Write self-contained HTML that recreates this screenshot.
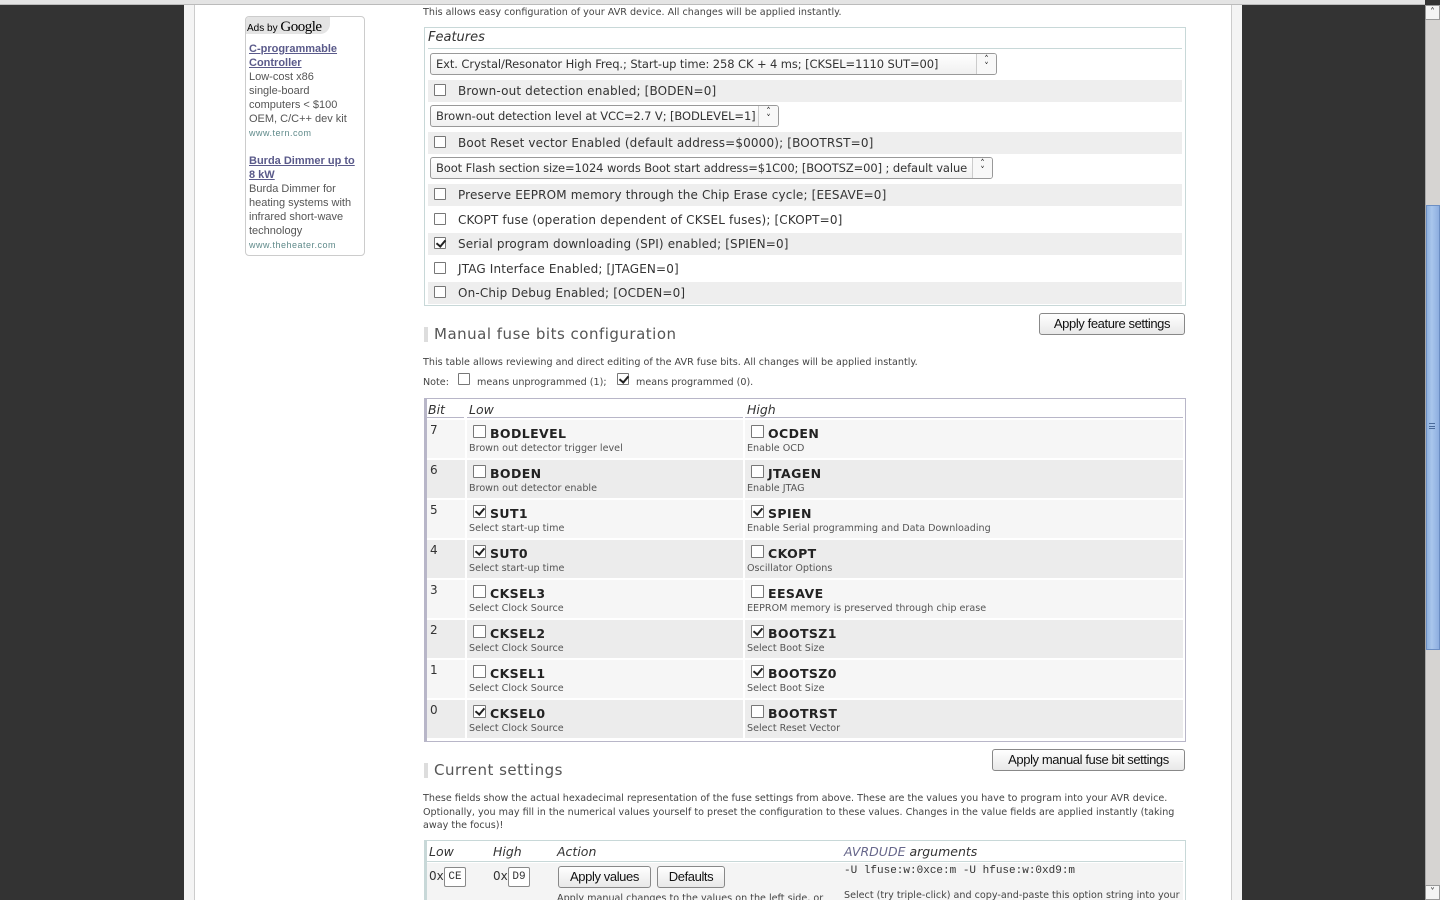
<!DOCTYPE html>
<html><head><meta charset="utf-8"><style>
*{margin:0;padding:0;box-sizing:border-box}
html,body{width:1440px;height:900px;overflow:hidden}
body{background:#333;font-family:"DejaVu Sans",sans-serif;color:#333;position:relative}
.a{position:absolute;white-space:nowrap}
.cb{position:absolute;width:12px;height:12px;border:1px solid #777;background:#fff;border-radius:1px}
.cb.c::after{content:"";position:absolute;left:3px;top:0px;width:4px;height:7px;border:solid #222;border-width:0 2px 2px 0;transform:rotate(40deg)}
.row{position:absolute;left:428px;width:754px;height:22px;font-size:12px;letter-spacing:.15px}
.row.g{background:#eeeeee}
.row .cb{left:6px;top:4px}
.row span{position:absolute;left:30px;top:4px}
.sel{position:absolute;left:430px;height:22px;border:1px solid #999;border-radius:3px;background:linear-gradient(#fff,#f0f0f0);font-size:11.5px;padding:3px 0 0 5px;white-space:nowrap;overflow:hidden;letter-spacing:-.1px}
.sel i{position:absolute;right:0;top:0;width:20px;height:20px;border-left:1px solid #ccc;font-style:normal;font-size:9px;text-align:center;line-height:7px;padding-top:3px;background:#f8f8f8;color:#222}
.btn{position:absolute;height:22px;border:1px solid #888;border-radius:3px;background:linear-gradient(#fff,#e8e8e8);font-family:"Liberation Sans",sans-serif;font-size:13px;letter-spacing:-.4px;text-align:center;line-height:20px;color:#111}
.h2{position:absolute;left:424px;font-size:15px;color:#555;letter-spacing:.5px;border-left:4px solid #ddd;padding-left:6px;line-height:15px}
.sm{font-size:9.6px;color:#444}
.fc{position:absolute;height:38px}
.fc b{position:absolute;left:23px;top:6px;font-size:12.5px;color:#222;letter-spacing:.4px}
.fc .cb{left:6px;top:5px;width:13px;height:13px}
.fc em{position:absolute;left:2px;top:23px;font-size:9.6px;color:#555;font-style:normal;white-space:nowrap}
.bn{position:absolute;left:3px;top:3px;font-size:12px}
</style></head><body>
<div class="a" style="left:0;top:0;width:1425px;height:5px;background:#e4e4e4;border-bottom:1px solid #bbb"></div>
<div class="a" style="left:184px;top:5px;width:1058px;height:895px;background:#f4f4f4"></div>
<div class="a" style="left:194px;top:5px;width:1038px;height:895px;background:#fff;border-left:1px solid #ccc;border-right:1px solid #ccc"></div>
<div class="a" style="left:1425px;top:5px;width:15px;height:895px;background:#d6d4d2;border-left:1px solid #aaa"></div>
<div class="a" style="left:1425px;top:5px;width:15px;height:15px;background:#f4f4f4;border:1px solid #999;font-size:10px;text-align:center;line-height:13px">&#708;</div>
<div class="a" style="left:1425px;top:885px;width:15px;height:15px;background:#f4f4f4;border:1px solid #999;font-size:10px;text-align:center;line-height:13px">&#709;</div>
<div class="a" style="left:1426px;top:205px;width:14px;height:445px;background:linear-gradient(90deg,#8fb2df,#a9c6ec 40%,#8daee0);border:1px solid #6c8fc4"></div>
<div class="a" style="left:1429px;top:423px;width:6px;height:6px;border-top:1px solid #4a6a9a;border-bottom:1px solid #4a6a9a"></div>
<div class="a" style="left:1429px;top:426px;width:6px;height:1px;background:#4a6a9a"></div>

<div class="a" style="left:245px;top:16px;width:120px;height:240px;border:1px solid #ccc;border-radius:4px;background:#fff"></div>
<div class="a" style="left:246px;top:17px;width:84px;height:17px;background:#e4e4e4;border-radius:3px 0 10px 0;font-family:'Liberation Sans',sans-serif;font-size:10px;padding:2px 0 0 1px;color:#000">Ads by <span style="font-family:'Liberation Serif',serif;font-size:15px;letter-spacing:-.5px">Google</span></div>
<div class="a" style="left:249px;top:42px;font-family:'Liberation Sans',sans-serif;font-size:11px;line-height:14px;color:#555;white-space:normal;width:109px">
<a style="color:#5a5a8a;font-weight:bold;text-decoration:underline">C-programmable Controller</a><br>Low-cost x86<br>single-board<br>computers &lt; $100<br>OEM, C/C++ dev kit<br><span style="color:#5f8a8a;font-size:9px;letter-spacing:.5px">www.tern.com</span><br><br>
<a style="color:#5a5a8a;font-weight:bold;text-decoration:underline">Burda Dimmer up to 8 kW</a><br>Burda Dimmer for<br>heating systems with<br>infrared short-wave<br>technology<br><span style="color:#5f8a8a;font-size:9px;letter-spacing:.5px">www.theheater.com</span></div>

<div class="a sm" style="left:423px;top:7px">This allows easy configuration of your AVR device. All changes will be applied instantly.</div>
<div class="a" style="left:424px;top:27px;width:762px;height:279px;border:1px solid #c8d8d8"></div>
<div class="a" style="left:428px;top:30px;font-size:13px;font-style:italic">Features</div>
<div class="a" style="left:428px;top:48px;width:754px;height:1px;background:#c8d8d8"></div>
<div class="sel" style="top:53px;width:567px">Ext. Crystal/Resonator High Freq.; Start-up time: 258 CK + 4 ms; [CKSEL=1110 SUT=00]<i>&#708;<br>&#709;</i></div>
<div class="row g" style="top:80px"><div class="cb"></div><span>Brown-out detection enabled; [BODEN=0]</span></div>
<div class="sel" style="top:105px;width:349px">Brown-out detection level at VCC=2.7 V; [BODLEVEL=1]<i>&#708;<br>&#709;</i></div>
<div class="row g" style="top:132px"><div class="cb"></div><span>Boot Reset vector Enabled (default address=$0000); [BOOTRST=0]</span></div>
<div class="sel" style="top:157px;width:563px">Boot Flash section size=1024 words Boot start address=$1C00; [BOOTSZ=00] ; default value<i>&#708;<br>&#709;</i></div>
<div class="row g" style="top:184px"><div class="cb"></div><span>Preserve EEPROM memory through the Chip Erase cycle; [EESAVE=0]</span></div>
<div class="row" style="top:209px"><div class="cb"></div><span>CKOPT fuse (operation dependent of CKSEL fuses); [CKOPT=0]</span></div>
<div class="row g" style="top:233px"><div class="cb c"></div><span>Serial program downloading (SPI) enabled; [SPIEN=0]</span></div>
<div class="row" style="top:258px"><div class="cb"></div><span>JTAG Interface Enabled; [JTAGEN=0]</span></div>
<div class="row g" style="top:282px"><div class="cb"></div><span>On-Chip Debug Enabled; [OCDEN=0]</span></div>

<div class="btn" style="left:1039px;top:313px;width:146px">Apply feature settings</div>
<div class="h2" style="top:327px">Manual fuse bits configuration</div>
<div class="a sm" style="left:423px;top:357px">This table allows reviewing and direct editing of the AVR fuse bits. All changes will be applied instantly.</div>
<div class="a sm" style="left:423px;top:377px">Note:</div>
<div class="cb" style="left:458px;top:373px"></div>
<div class="a sm" style="left:477px;top:377px">means unprogrammed (1);</div>
<div class="cb c" style="left:617px;top:373px"></div>
<div class="a sm" style="left:636px;top:377px">means programmed (0).</div>

<div class="a" style="left:424px;top:398px;width:762px;height:344px;border:1px solid #b8b6c8;border-left:3px solid #b8b6c8"></div>
<div class="a" style="left:428px;top:402px;font-size:12.5px;font-style:italic">Bit</div>
<div class="a" style="left:469px;top:402px;font-size:12.5px;font-style:italic">Low</div>
<div class="a" style="left:747px;top:402px;font-size:12.5px;font-style:italic">High</div>
<div class="a" style="left:427px;top:417px;width:37px;height:1px;background:#b8b6c8"></div>
<div class="a" style="left:467px;top:417px;width:276px;height:1px;background:#b8b6c8"></div>
<div class="a" style="left:745px;top:417px;width:438px;height:1px;background:#b8b6c8"></div>

<div class="fc" style="left:427px;top:420px;width:38px;background:#f6f6f6"><div class="bn">7</div></div>
<div class="fc" style="left:467px;top:420px;width:276px;background:#f6f6f6"><div class="cb"></div><b>BODLEVEL</b><em>Brown out detector trigger level</em></div>
<div class="fc" style="left:745px;top:420px;width:438px;background:#f6f6f6"><div class="cb"></div><b>OCDEN</b><em>Enable OCD</em></div>
<div class="fc" style="left:427px;top:460px;width:38px;background:#ececec"><div class="bn">6</div></div>
<div class="fc" style="left:467px;top:460px;width:276px;background:#ececec"><div class="cb"></div><b>BODEN</b><em>Brown out detector enable</em></div>
<div class="fc" style="left:745px;top:460px;width:438px;background:#ececec"><div class="cb"></div><b>JTAGEN</b><em>Enable JTAG</em></div>
<div class="fc" style="left:427px;top:500px;width:38px;background:#f6f6f6"><div class="bn">5</div></div>
<div class="fc" style="left:467px;top:500px;width:276px;background:#f6f6f6"><div class="cb c"></div><b>SUT1</b><em>Select start-up time</em></div>
<div class="fc" style="left:745px;top:500px;width:438px;background:#f6f6f6"><div class="cb c"></div><b>SPIEN</b><em>Enable Serial programming and Data Downloading</em></div>
<div class="fc" style="left:427px;top:540px;width:38px;background:#ececec"><div class="bn">4</div></div>
<div class="fc" style="left:467px;top:540px;width:276px;background:#ececec"><div class="cb c"></div><b>SUT0</b><em>Select start-up time</em></div>
<div class="fc" style="left:745px;top:540px;width:438px;background:#ececec"><div class="cb"></div><b>CKOPT</b><em>Oscillator Options</em></div>
<div class="fc" style="left:427px;top:580px;width:38px;background:#f6f6f6"><div class="bn">3</div></div>
<div class="fc" style="left:467px;top:580px;width:276px;background:#f6f6f6"><div class="cb"></div><b>CKSEL3</b><em>Select Clock Source</em></div>
<div class="fc" style="left:745px;top:580px;width:438px;background:#f6f6f6"><div class="cb"></div><b>EESAVE</b><em>EEPROM memory is preserved through chip erase</em></div>
<div class="fc" style="left:427px;top:620px;width:38px;background:#ececec"><div class="bn">2</div></div>
<div class="fc" style="left:467px;top:620px;width:276px;background:#ececec"><div class="cb"></div><b>CKSEL2</b><em>Select Clock Source</em></div>
<div class="fc" style="left:745px;top:620px;width:438px;background:#ececec"><div class="cb c"></div><b>BOOTSZ1</b><em>Select Boot Size</em></div>
<div class="fc" style="left:427px;top:660px;width:38px;background:#f6f6f6"><div class="bn">1</div></div>
<div class="fc" style="left:467px;top:660px;width:276px;background:#f6f6f6"><div class="cb"></div><b>CKSEL1</b><em>Select Clock Source</em></div>
<div class="fc" style="left:745px;top:660px;width:438px;background:#f6f6f6"><div class="cb c"></div><b>BOOTSZ0</b><em>Select Boot Size</em></div>
<div class="fc" style="left:427px;top:700px;width:38px;background:#ececec"><div class="bn">0</div></div>
<div class="fc" style="left:467px;top:700px;width:276px;background:#ececec"><div class="cb c"></div><b>CKSEL0</b><em>Select Clock Source</em></div>
<div class="fc" style="left:745px;top:700px;width:438px;background:#ececec"><div class="cb"></div><b>BOOTRST</b><em>Select Reset Vector</em></div>

<div class="btn" style="left:992px;top:749px;width:193px">Apply manual fuse bit settings</div>
<div class="h2" style="top:763px">Current settings</div>
<div class="a sm" style="left:423px;top:792px;line-height:13.5px;white-space:normal;width:760px">These fields show the actual hexadecimal representation of the fuse settings from above. These are the values you have to program into your AVR device. Optionally, you may fill in the numerical values yourself to preset the configuration to these values. Changes in the value fields are applied instantly (taking away the focus)!</div>

<div class="a" style="left:424px;top:840px;width:762px;height:60px;border:1px solid #c8d8d8;border-left:3px solid #c8d8d8;border-bottom:none"></div>
<div class="a" style="left:429px;top:844px;font-size:12.5px;font-style:italic">Low</div>
<div class="a" style="left:493px;top:844px;font-size:12.5px;font-style:italic">High</div>
<div class="a" style="left:557px;top:844px;font-size:12.5px;font-style:italic">Action</div>
<div class="a" style="left:844px;top:844px;font-size:12.5px;font-style:italic"><span style="color:#66668a">AVRDUDE</span> arguments</div>
<div class="a" style="left:427px;top:861px;width:756px;height:1px;background:#c8d8d8"></div>
<div class="a" style="left:427px;top:863px;width:756px;height:37px;background:#f4f4f4"></div>
<div class="a" style="left:429px;top:869px;font-size:12px">0x</div>
<div class="a" style="left:444px;top:867px;width:22px;height:20px;border:1px solid #888;border-radius:2px;background:#fff;font-family:'Liberation Mono',monospace;font-size:11px;text-align:center;line-height:18px">CE</div>
<div class="a" style="left:493px;top:869px;font-size:12px">0x</div>
<div class="a" style="left:508px;top:867px;width:22px;height:20px;border:1px solid #888;border-radius:2px;background:#fff;font-family:'Liberation Mono',monospace;font-size:11px;text-align:center;line-height:18px">D9</div>
<div class="btn" style="left:558px;top:866px;width:93px">Apply values</div>
<div class="btn" style="left:657px;top:866px;width:68px">Defaults</div>
<div class="a sm" style="left:557px;top:893px">Apply manual changes to the values on the left side, or</div>
<div class="a" style="left:844px;top:865px;font-family:'Liberation Mono',monospace;font-size:11px">-U lfuse:w:0xce:m -U hfuse:w:0xd9:m</div>
<div class="a sm" style="left:844px;top:890px">Select (try triple-click) and copy-and-paste this option string into your</div>
</body></html>
